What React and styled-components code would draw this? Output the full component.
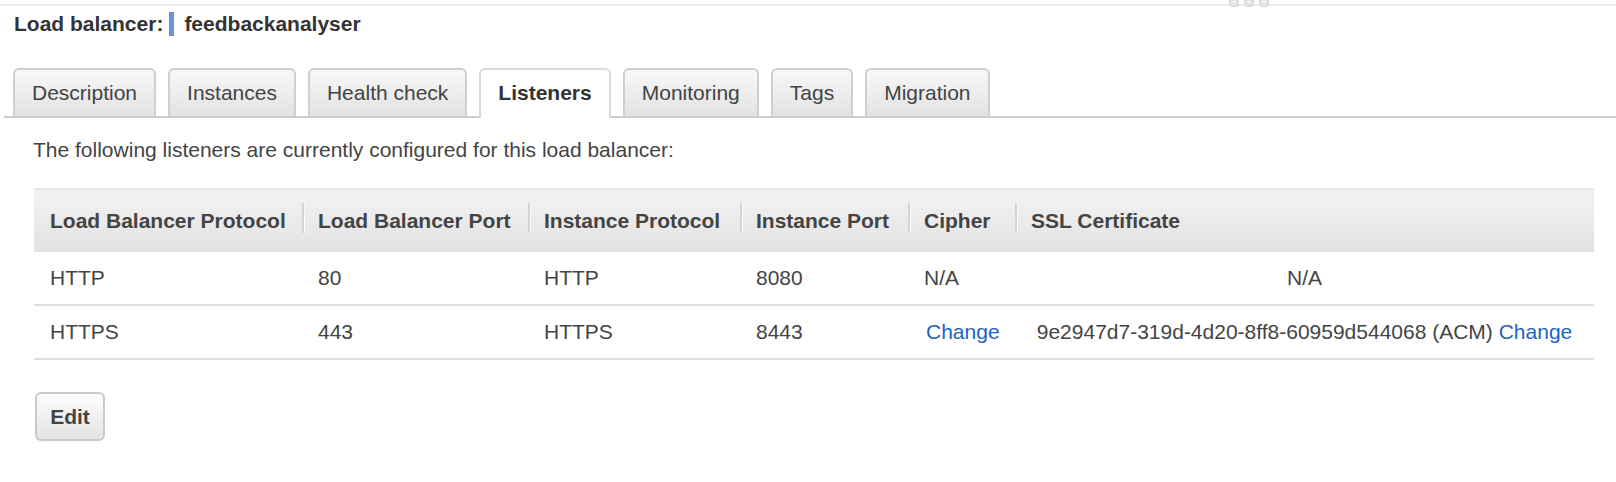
import React from 'react';
import styled, { createGlobalStyle } from 'styled-components';

const GlobalStyle = createGlobalStyle`
  body {
    margin: 0;
    background: #fff;
    font-family: 'Liberation Sans', Arial, Helvetica, sans-serif;
    font-size: 21px;
    color: #444;
  }
`;

const tabs = ['Description', 'Instances', 'Health check', 'Listeners', 'Monitoring', 'Tags', 'Migration'];
const activeTab = 'Listeners';

const columns = '268px 226px 212px 168px 107px 1fr';

const headers = [
  'Load Balancer Protocol',
  'Load Balancer Port',
  'Instance Protocol',
  'Instance Port',
  'Cipher',
  'SSL Certificate',
];

const listeners = [
  { lbProtocol: 'HTTP', lbPort: '80', instProtocol: 'HTTP', instPort: '8080', cipher: null, cert: null },
  {
    lbProtocol: 'HTTPS',
    lbPort: '443',
    instProtocol: 'HTTPS',
    instPort: '8443',
    cipher: 'change',
    cert: '9e2947d7-319d-4d20-8ff8-60959d544068 (ACM)',
  },
];

const App = () => {
  return (
    <Page>
      <GlobalStyle />
      <TopRule>
        <Handles>
          <Handle />
          <Handle />
          <Handle />
        </Handles>
      </TopRule>

      <TitleRow>
        <TitleLabel>Load balancer:</TitleLabel>
        <TitleMarker />
        <TitleName>feedbackanalyser</TitleName>
      </TitleRow>

      <TabBar>
        {tabs.map((t) => (
          <Tab key={t} $active={t === activeTab}>
            {t}
          </Tab>
        ))}
      </TabBar>

      <Content>
        <Intro>The following listeners are currently configured for this load balancer:</Intro>

        <Table>
          <HeadRow>
            {headers.map((h, i) => (
              <HeadCell key={h} $divider={i > 0}>
                {h}
              </HeadCell>
            ))}
          </HeadRow>
          {listeners.map((l) => (
            <Row key={l.lbPort}>
              <Cell>{l.lbProtocol}</Cell>
              <Cell>{l.lbPort}</Cell>
              <Cell>{l.instProtocol}</Cell>
              <Cell>{l.instPort}</Cell>
              <Cell>{l.cipher ? <LinkText $nudge>Change</LinkText> : 'N/A'}</Cell>
              <Cell $align='center'>
                {l.cert ? (
                  <>
                    {l.cert} <LinkText>Change</LinkText>
                  </>
                ) : (
                  'N/A'
                )}
              </Cell>
            </Row>
          ))}
        </Table>

        <EditButton>Edit</EditButton>
      </Content>
    </Page>
  );
};

const Page = styled.div`
  width: 1616px;
  height: 482px;
  overflow: hidden;
`;

const TopRule = styled.div`
  position: relative;
  margin-top: 4px;
  height: 2px;
  background: #ececec;
`;

const Handles = styled.div`
  position: absolute;
  top: -4px;
  left: 1229px;
  display: flex;
  gap: 5px;
`;

const Handle = styled.span`
  width: 10px;
  height: 7px;
  border-radius: 0 0 4px 4px;
  background: #e4e4e4;
  border: 1px solid #d6d6d6;
  border-top: none;
  box-sizing: border-box;
  position: relative;

  &::after {
    content: '';
    position: absolute;
    left: 2px;
    top: 1px;
    border-left: 2px solid transparent;
    border-right: 2px solid transparent;
    border-top: 3px solid #f6f6f6;
  }
`;

const TitleRow = styled.div`
  display: flex;
  align-items: center;
  height: 36px;
  padding-left: 14px;
  font-weight: bold;
  color: #333;
`;

const TitleLabel = styled.span``;

const TitleMarker = styled.span`
  width: 5px;
  height: 24px;
  margin: 0 10px 0 6px;
  background: #6797d3;
`;

const TitleName = styled.span``;

const TabBar = styled.div`
  display: flex;
  align-items: flex-end;
  gap: 12px;
  margin: 26px 0 0 4px;
  padding-left: 9px;
  border-bottom: 2px solid #cccccc;
`;

const Tab = styled.div`
  box-sizing: border-box;
  height: ${(p) => (p.$active ? '50px' : '48px')};
  margin-bottom: ${(p) => (p.$active ? '-2px' : '0')};
  padding: 0 17px ${(p) => (p.$active ? '2px' : '0')};
  display: flex;
  align-items: center;
  border: 2px solid ${(p) => (p.$active ? '#dadada' : '#cfcfcf')};
  border-bottom: none;
  border-radius: 6px 6px 0 0;
  background: ${(p) => (p.$active ? '#ffffff' : 'linear-gradient(#f8f8f8, #e2e2e2)')};
  font-weight: ${(p) => (p.$active ? 'bold' : 'normal')};
  color: ${(p) => (p.$active ? '#333' : '#444')};
  white-space: nowrap;
`;

const Content = styled.div`
  padding-left: 33px;
`;

const Intro = styled.p`
  margin: 20px 0 0;
  line-height: 24px;
  color: #444;
`;

const Table = styled.div`
  width: 1560px;
  margin: 26px 0 0 1px;
`;

const HeadRow = styled.div`
  display: grid;
  grid-template-columns: ${columns};
  height: 64px;
  box-sizing: border-box;
  border-top: 2px solid #e6e6e6;
  background: linear-gradient(#f3f3f3, #e2e2e2);
`;

const HeadCell = styled.div`
  position: relative;
  display: flex;
  align-items: center;
  padding-left: 16px;
  font-weight: bold;
  color: #444;
  white-space: nowrap;

  ${(p) =>
    p.$divider &&
    `
    &::before {
      content: '';
      position: absolute;
      left: 0;
      top: 13px;
      height: 30px;
      border-left: 2px solid #d4d4d4;
      border-right: 1px solid #fafafa;
    }
  `}
`;

const Row = styled.div`
  display: grid;
  grid-template-columns: ${columns};
  height: 54px;
  box-sizing: border-box;
  border-bottom: 2px solid #dedede;
`;

const Cell = styled.div`
  display: flex;
  align-items: center;
  justify-content: ${(p) => (p.$align === 'center' ? 'center' : 'flex-start')};
  padding: 0 16px;
  white-space: pre;
  color: #444;
`;

const LinkText = styled.span`
  color: #1f62c2;
  cursor: pointer;
  margin-left: ${(p) => (p.$nudge ? '2px' : '0')};
`;

const EditButton = styled.button`
  display: block;
  margin: 32px 0 0 2px;
  width: 70px;
  height: 49px;
  padding: 0;
  border: 2px solid #c9c9c9;
  border-radius: 6px;
  background: linear-gradient(#fdfdfd, #e4e4e4);
  font-family: 'Liberation Sans', Arial, Helvetica, sans-serif;
  font-size: 21px;
  font-weight: bold;
  color: #444;
  cursor: pointer;
`;

export default App;
